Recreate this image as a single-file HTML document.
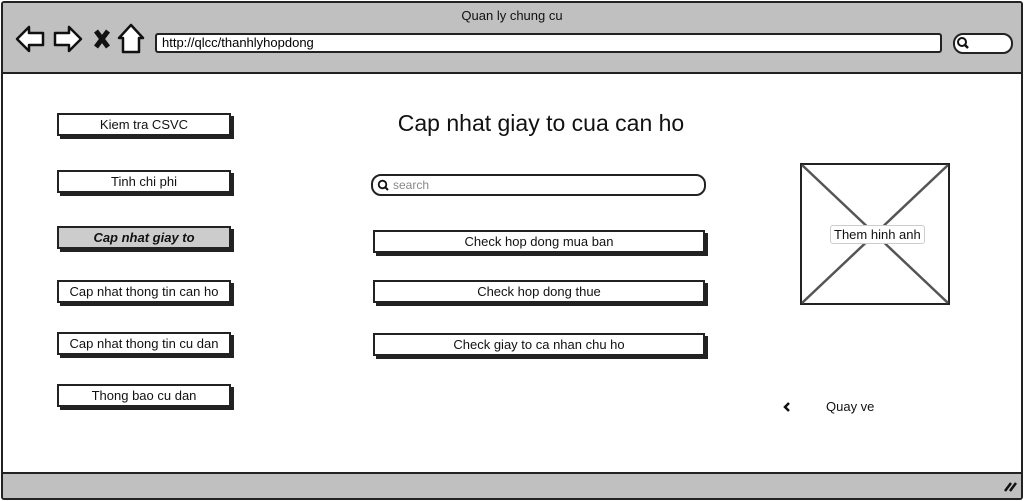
<!DOCTYPE html><html><head><style>
body{margin:0;width:1024px;height:501px;overflow:hidden;background:#fff;font-family:"Liberation Sans",sans-serif;}
.frame{position:absolute;left:1px;top:1px;width:1018px;height:495px;border:2px solid #222;border-radius:3px;overflow:hidden;background:#fff}
.top{position:absolute;left:0;top:0;width:100%;height:69px;background:#c0c0c0;border-bottom:2px solid #222}
.bot{position:absolute;left:0;bottom:0;width:100%;height:24px;background:#c0c0c0;border-top:2px solid #222}
.b{position:absolute;height:19px;border:2px solid #222;background:#fff;box-shadow:3px 3px 0 #222;font-size:13px;text-align:center;line-height:19px;color:#111}
.t{position:absolute;font-size:13px;color:#111}
</style></head><body><div class="frame">
<div class="top"></div><div class="bot"></div>
<div class="t" style="left:0;width:1018px;text-align:center;top:5px">Quan ly chung cu</div>
<svg style="position:absolute;left:12px;top:20px" width="135" height="32" viewBox="0 0 135 32">
<path d="M2 16 L14 4 L14 10 L28 10 L28 22 L14 22 L14 28 Z" fill="#fff" stroke="#111" stroke-width="2.5" stroke-linejoin="round"/>
<path d="M66 16 L54 4 L54 10 L40 10 L40 22 L54 22 L54 28 Z" fill="#fff" stroke="#111" stroke-width="2.5" stroke-linejoin="round"/>
<path d="M81 8 L93 24 M93 8 L81 24" stroke="#111" stroke-width="5"/>
<path d="M116 2 L104 15 L108 15 L108 29 L124 29 L124 15 L128 15 Z" fill="#fff" stroke="#111" stroke-width="2.5" stroke-linejoin="round"/>
</svg>
<div style="position:absolute;left:152px;top:30px;width:778px;height:16px;border:2px solid #222;border-radius:3px;background:#fff;font-size:13px;line-height:16px;padding-left:5px">http://qlcc/thanhlyhopdong</div>
<div style="position:absolute;left:950px;top:30px;width:56px;height:17px;border:2px solid #222;border-radius:10px;background:#fff"></div>
<svg style="position:absolute;left:953px;top:33px" width="14" height="14"><circle cx="6" cy="6" r="4" fill="none" stroke="#111" stroke-width="2"/><path d="M9 9 L12 12" stroke="#111" stroke-width="2.5"/></svg>
<div class="b" style="left:54px;top:110px;width:170px">Kiem tra CSVC</div>
<div class="b" style="left:54px;top:167px;width:170px">Tinh chi phi</div>
<div class="b" style="left:54px;top:223px;width:170px;background:#ccc;font-style:italic;font-weight:bold">Cap nhat giay to</div>
<div class="b" style="left:54px;top:277px;width:170px">Cap nhat thong tin can ho</div>
<div class="b" style="left:54px;top:329px;width:170px">Cap nhat thong tin cu dan</div>
<div class="b" style="left:54px;top:381px;width:170px">Thong bao cu dan</div>
<div class="t" style="left:300px;width:476px;text-align:center;top:107px;font-size:23px">Cap nhat giay to cua can ho</div>
<div style="position:absolute;left:368px;top:171px;height:18px;border:2px solid #222;border-radius:10px;background:#fff;font-size:12px;line-height:18px;color:#888;padding-left:20px;width:311px">search</div>
<svg style="position:absolute;left:374px;top:176px" width="13" height="13"><circle cx="5.5" cy="5.5" r="3.8" fill="none" stroke="#111" stroke-width="1.8"/><path d="M8 8 L11 11" stroke="#111" stroke-width="2"/></svg>
<div class="b" style="left:370px;top:227px;width:328px">Check hop dong mua ban</div>
<div class="b" style="left:370px;top:277px;width:328px">Check hop dong thue</div>
<div class="b" style="left:370px;top:330px;width:328px">Check giay to ca nhan chu ho</div>
<svg style="position:absolute;left:797px;top:160px" width="152" height="143"><rect x="1" y="1" width="148" height="140" fill="#fff" stroke="#222" stroke-width="2"/><path d="M2 2 L148 140 M148 2 L2 140" stroke="#555" stroke-width="2.5"/></svg>
<div class="t" style="left:827px;top:222px;background:#fff;border:1px solid #ccc;border-radius:3px;padding:1px 3px">Them hinh anh</div>
<svg style="position:absolute;left:779px;top:398px" width="10" height="12"><path d="M7 2 L3 6 L7 10" fill="none" stroke="#111" stroke-width="2.5"/></svg>
<div class="t" style="left:823px;top:396px">Quay ve</div>
<svg style="position:absolute;left:1000px;top:476px" width="16" height="14"><path d="M2 12 L8 4 M7 12 L13 4" stroke="#111" stroke-width="2.5"/></svg>
</div></body></html>
